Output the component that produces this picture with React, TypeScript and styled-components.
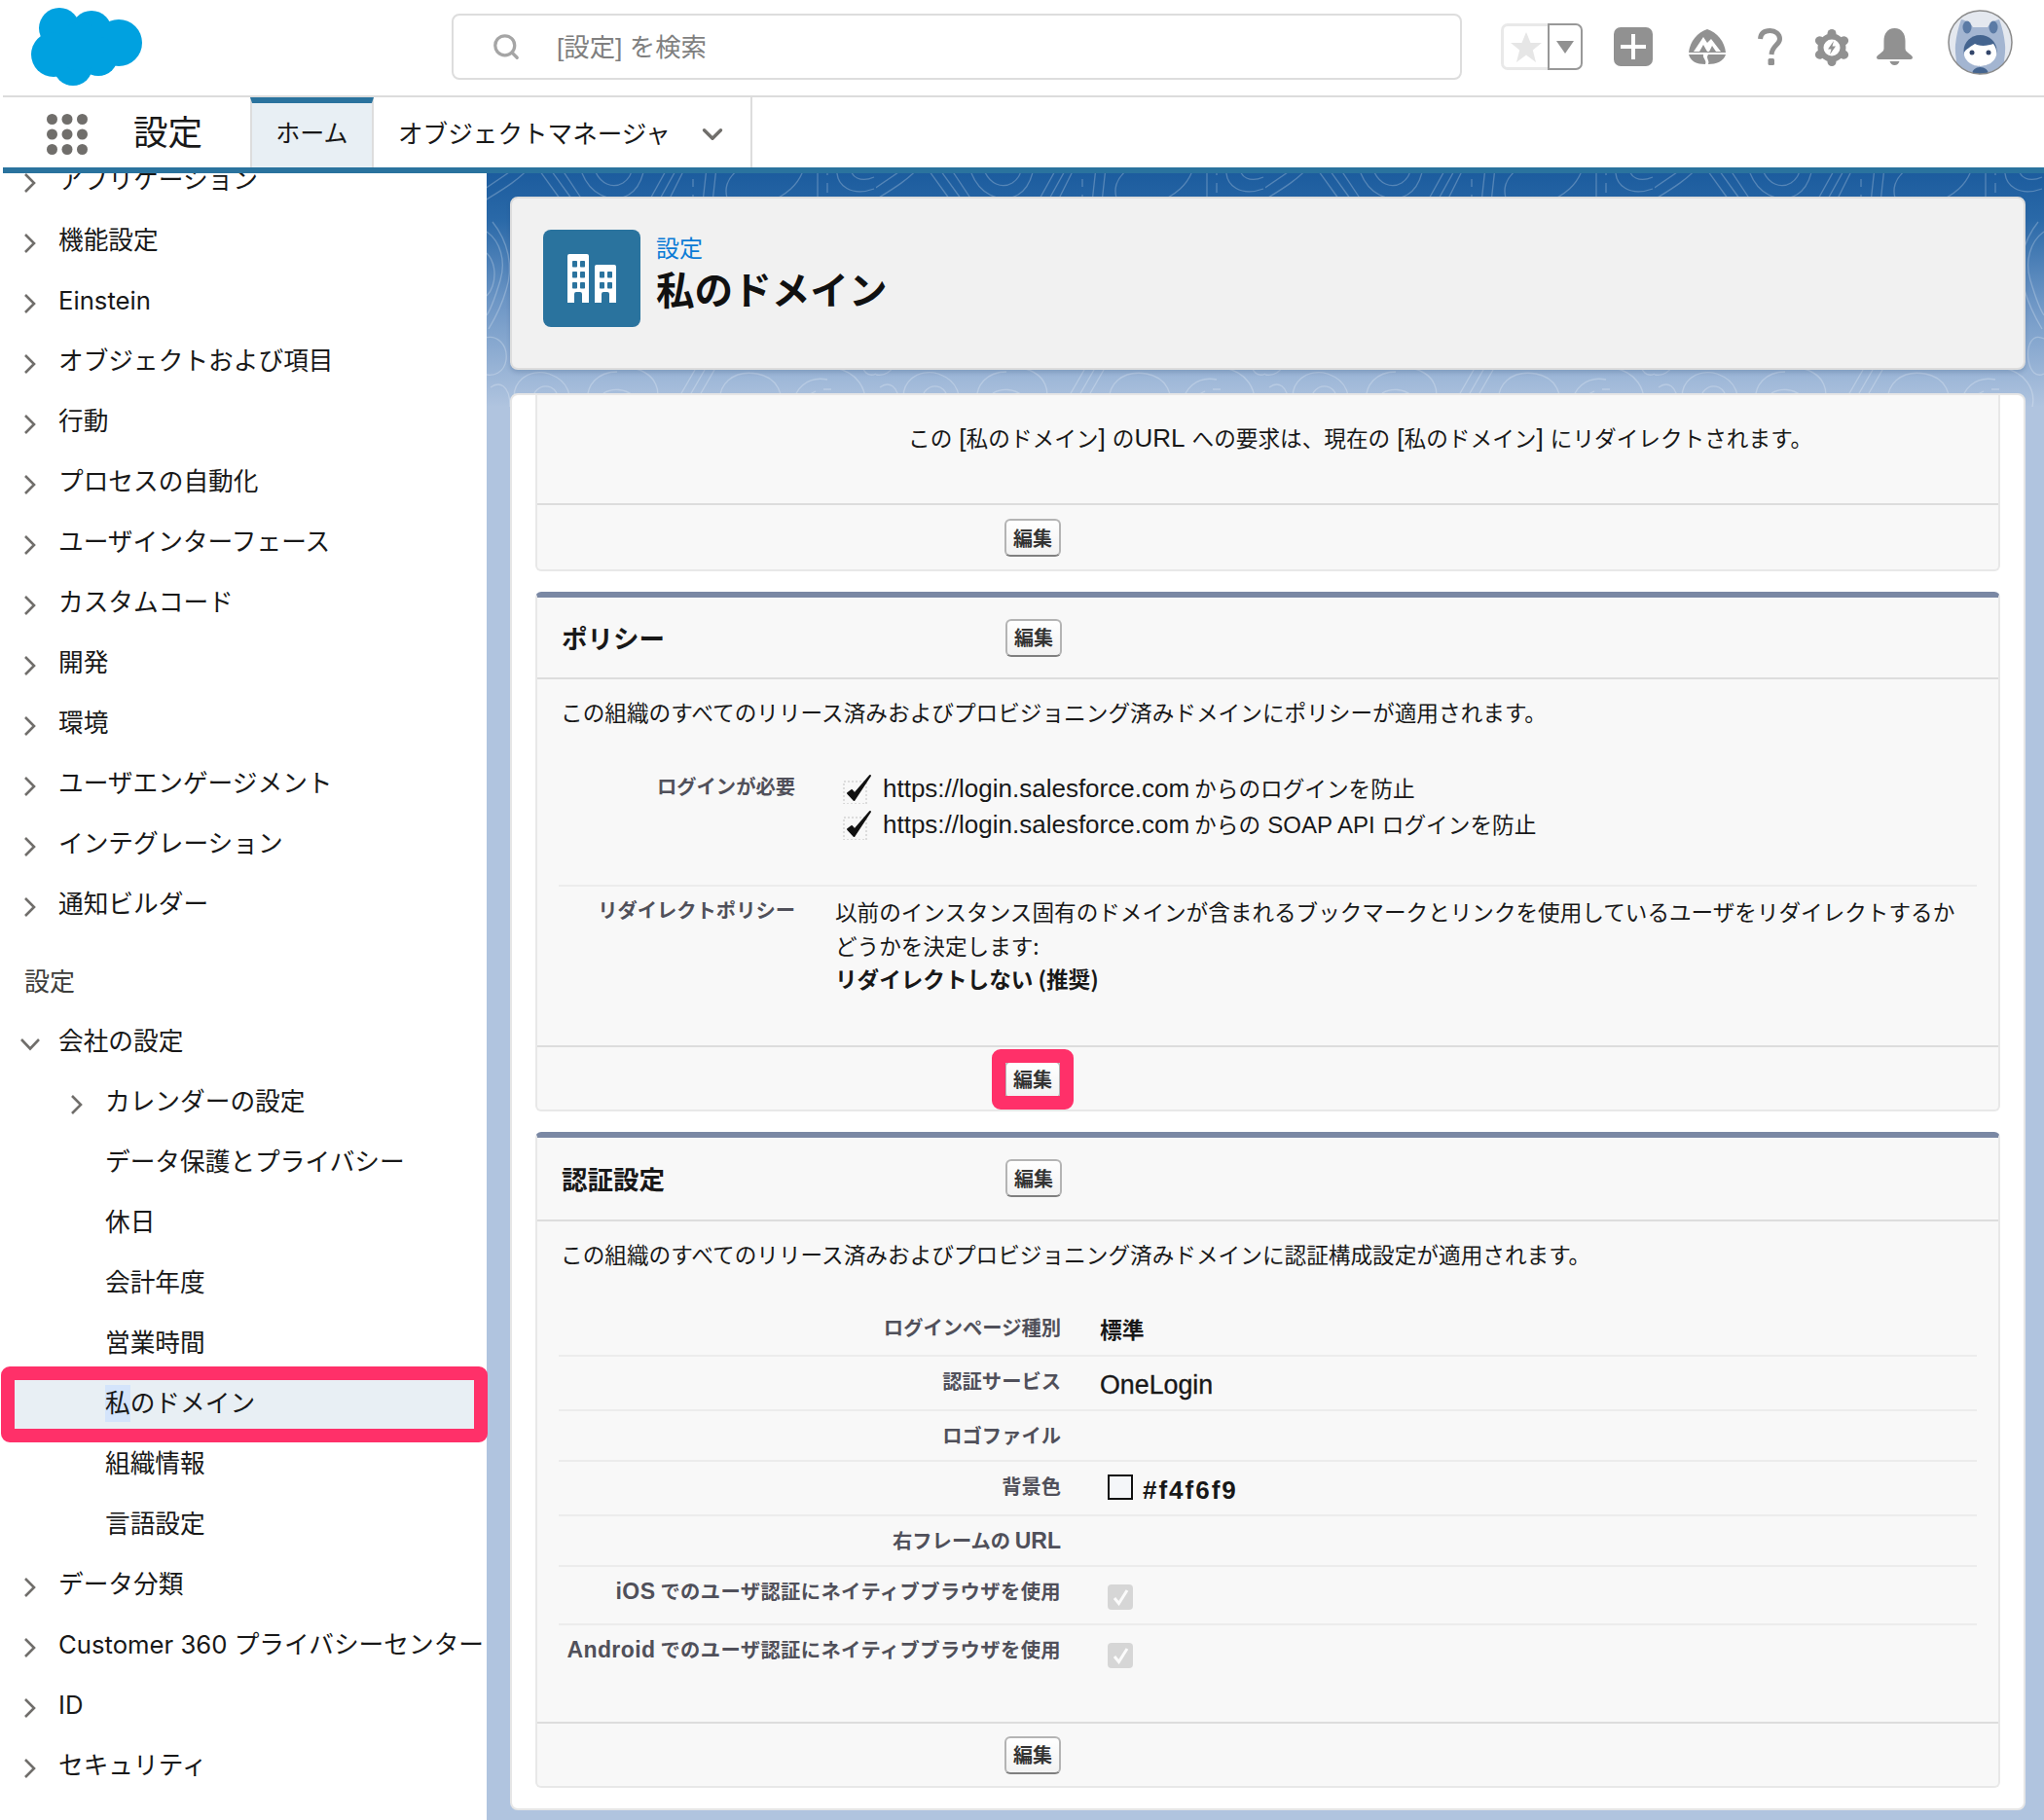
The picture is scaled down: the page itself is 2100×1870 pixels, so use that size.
import * as React from "react";
import styled, { createGlobalStyle } from "styled-components";
import { ChevronDown, Search } from "lucide-react";

const CJK = `"Noto Sans CJK JP", "Noto Sans CJK SC", sans-serif`;
const PINK = "#ff3069";
const TEAL = "#2a739e";

const GlobalStyle = createGlobalStyle`
  html, body { margin: 0; padding: 0; background: #fff; }
  * { box-sizing: border-box; }
  body { font-family: ${CJK}; color: #181818; }
`;

const Page = styled.div`
  width: 2100px;
  height: 1870px;
  display: flex;
  flex-direction: column;
  overflow: hidden;
  padding-left: 3px;
  background: #fff;
`;

/* top bar */
const TopBar = styled.header`
  height: 100px;
  flex: none;
  display: flex;
  align-items: flex-start;
  border-bottom: 2px solid #dcdcdc;
`;
const LogoSlot = styled.div`
  width: 114px;
  height: 80px;
  margin: 8px 0 0 29px;
`;
const SearchBox = styled.div`
  width: 1038px;
  height: 68px;
  margin: 14px 0 0 318px;
  border: 2px solid #dddddd;
  border-radius: 8px;
  display: flex;
  align-items: center;
  padding-left: 39px;
  gap: 37px;
  color: #a5a5a5;
  font: 400 26.4px/38px "Liberation Sans", ${CJK};
  span { color: #7f7f7f; margin-top: 1px; }
`;
const Favorite = styled.div`
  display: flex;
  width: 84px;
  height: 48px;
  margin: 24px 0 0 40px;
`;
const StarPart = styled.div`
  width: 48px;
  border: 3px solid #e9e9e9;
  border-right: 0;
  border-radius: 7px 0 0 7px;
  display: flex;
  align-items: center;
  justify-content: center;
`;
const CaretPart = styled.div`
  width: 36px;
  border: 2px solid #989898;
  border-radius: 0 7px 7px 0;
  display: flex;
  align-items: center;
  justify-content: center;
`;
const ToolIcon = styled.div<{ $left: number; $top: number }>`
  margin: ${(p) => p.$top}px 0 0 ${(p) => p.$left}px;
  display: flex;
  svg { display: block; }
`;

/* app nav */
const NavBar = styled.nav`
  height: 78px;
  flex: none;
  display: flex;
  border-bottom: 6px solid ${TEAL};
`;
const AppLauncher = styled.div`
  width: 134px;
  padding: 17px 0 0 45px;
`;
const AppName = styled.div`
  width: 120px;
  font: 400 35.5px/68px ${CJK};
`;
const HomeTab = styled.div`
  width: 127px;
  border-top: 6px solid ${TEAL};
  border-left: 2px solid #dddddd;
  border-right: 2px solid #dddddd;
  background: #e8eff4;
  text-align: center;
  font: 400 25px/58px ${CJK};
`;
const MenuTab = styled.div`
  width: 389px;
  display: flex;
  align-items: center;
  padding-left: 25px;
  border-right: 2px solid #dddddd;
  font: 400 25.6px/70px ${CJK};
  white-space: nowrap;
  svg { margin-left: 26px; margin-top: 3px; color: #706e6b; }
`;

const Columns = styled.div`
  flex: 1;
  display: flex;
  min-height: 0;
`;

/* side tree */
const Sidebar = styled.aside`
  position: relative;
  z-index: 2;
  width: 497px;
  flex: none;
  overflow-y: clip;
  background: #fff;
  padding-top: 1px;
`;
const TreeList = styled.div`
  margin-top: -25.5px;
`;
const TreeRow = styled.div<{ $indent: number; $current?: boolean }>`
  position: relative;
  height: 62px;
  display: flex;
  align-items: center;
  padding-left: ${(p) => p.$indent}px;
  font: 400 25.7px/36px Inter, ${CJK};
  white-space: nowrap;
  ${(p) =>
    p.$current &&
    `
    &::before {
      content: "";
      position: absolute;
      left: -2px;
      right: -1px;
      top: -7px;
      bottom: -9px;
      background: #e8eff4;
      border: 14px solid ${PINK};
      border-radius: 9px;
    }
  `}
`;
const TreeHeading = styled.div`
  height: 62px;
  margin-top: 17px;
  padding-left: 22px;
  color: #3e3e3c;
  font: 400 26px/60px ${CJK};
`;
const ChevronSlot = styled.div`
  width: 36px;
  flex: none;
  display: flex;
  margin-top: 7px;
  color: #706e6b;
`;
const RowLabel = styled.span`
  position: relative;
`;
const Selected = styled.span`
  background: #d4e4fb;
  display: inline-block;
  line-height: 38px;
`;

/* main column */
const Main = styled.main`
  position: relative;
  flex: 1;
  min-width: 0;
  background: #b0c4df;
  padding: 24px 19px 0 24px;
`;
const Backdrop = styled.svg`
  position: absolute;
  left: 0;
  top: 0;
  width: 100%;
  height: 240px;
`;
const TitleCard = styled.section`
  position: relative;
  height: 178px;
  background: #f1f1f1;
  border: 2px solid #dddddd;
  border-radius: 8px;
  box-shadow: 0 3px 4px rgba(40, 70, 110, 0.2);
  padding: 32px;
  display: flex;
  gap: 16px;
`;
const TitleIcon = styled.div`
  width: 100px;
  height: 100px;
  background: ${TEAL};
  border-radius: 8px;
  display: flex;
  align-items: center;
  justify-content: center;
`;
const Crumb = styled.div`
  color: #0b7bd6;
  font: 400 24px/34px ${CJK};
  margin-top: 1px;
`;
const PageTitle = styled.h1`
  margin: 0;
  font: 700 39.6px/50px ${CJK};
  color: #111;
`;
const BodyCard = styled.div`
  position: relative;
  margin-top: 24px;
  height: 1456px;
  background: #fff;
  border: 2px solid #e6e6e6;
  border-radius: 8px;
  padding: 0 24px;
`;
const Section = styled.section<{ $bar?: boolean }>`
  background: #f8f8f8;
  border: 2px solid #e8e8e8;
  border-top: ${(p) => (p.$bar ? "6px solid #7a88a4" : "0")};
  border-radius: ${(p) => (p.$bar ? "6px" : "0 0 6px 6px")};
  margin-bottom: 21px;
`;
const SectionHead = styled.div<{ $height: number }>`
  height: ${(p) => p.$height}px;
  display: grid;
  grid-template-columns: 456px auto;
  justify-content: start;
  align-items: center;
  padding-left: 25px;
  border-bottom: 2px solid #dddddd;
`;
const SectionName = styled.h2`
  margin: 0;
  font: 700 26.5px/36px ${CJK};
`;
const SectionFoot = styled.div<{ $height: number; $low?: boolean }>`
  height: ${(p) => p.$height}px;
  border-top: 2px solid #dddddd;
  padding: ${(p) => (p.$low ? "3px" : "1px")} 0 0 480px;
  display: flex;
  align-items: center;
`;
const EditButton = styled.button<{ $flagged?: boolean }>`
  position: relative;
  width: 58px;
  height: 39px;
  padding: 0;
  border: 2px solid #b4b4b4;
  border-bottom-color: #7f7f7f;
  border-radius: 6px;
  background: linear-gradient(#ffffff, #f2f2f2);
  color: #333;
  font: 700 20px/34px ${CJK};
  ${(p) =>
    p.$flagged &&
    `
    &::before {
      content: "";
      position: absolute;
      inset: -14px -15px -13px -15px;
      border: 14px solid ${PINK};
      border-radius: 9px;
    }
  `}
`;
const Notice = styled.p`
  margin: 0;
  height: 111px;
  padding: 27px 0 0 381px;
  font: 400 22.65px/34px ${CJK};
  word-spacing: 2px;
`;
const Lead = styled.p<{ $height: number }>`
  margin: 0;
  height: ${(p) => p.$height}px;
  padding: 17px 0 0 24px;
  font: 400 22.65px/34px ${CJK};
`;
const L = styled.span<{ $size?: number }>`
  font-family: "Liberation Sans", sans-serif;
  font-size: ${(p) => p.$size ?? 26}px;
`;
const PolicyRow = styled.div<{ $pad: string; $rule?: boolean }>`
  margin: 0 22px;
  padding: ${(p) => p.$pad};
  display: grid;
  grid-template-columns: 243px 1fr;
  column-gap: 41px;
  ${(p) => p.$rule && "border-bottom: 2px solid #ececec;"}
`;
const FieldLabel = styled.div`
  text-align: right;
  color: #50505a;
  font: 700 20.3px/28px ${CJK};
  white-space: nowrap;
  span { font-family: "Liberation Sans", sans-serif; font-size: 23px; }
`;
const CheckList = styled.div`
  margin-top: -2px;
`;
const CheckLine = styled.div`
  display: flex;
  align-items: center;
  gap: 11px;
  height: 37px;
  margin-left: 8px;
  font: 400 22.65px/37px ${CJK};
  white-space: nowrap;
`;
const PolicyText = styled.div`
  font: 400 22.6px/34.6px ${CJK};
  white-space: nowrap;
  strong { font-weight: 700; }
`;
const AuthRow = styled.div<{ $height: number; $last?: boolean }>`
  height: ${(p) => p.$height}px;
  margin: 0 22px;
  display: grid;
  grid-template-columns: 516px 1fr;
  column-gap: 40px;
  ${(p) => !p.$last && "border-bottom: 2px solid #ececec;"}
`;
const AuthLabel = styled(FieldLabel)<{ $wide?: boolean }>`
  padding-top: 10px;
  letter-spacing: ${(p) => (p.$wide ? "0.4px" : "0")};
`;
const AuthValue = styled.div`
  padding-top: 13px;
  font: 500 22.8px/28px ${CJK};
  display: flex;
  align-items: flex-start;
`;
const ServiceName = styled.span`
  font: 400 26.8px/32px "Liberation Sans", sans-serif;
  -webkit-text-stroke: 0.35px #181818;
`;
const Swatch = styled.i<{ $color: string }>`
  width: 26px;
  height: 26px;
  margin: 0 10px 0 8px;
  border: 2px solid #111;
  background: ${(p) => p.$color};
`;
const HexValue = styled.span`
  font: 700 26px/32px "Liberation Sans", sans-serif;
  letter-spacing: 2px;
`;
const DisabledCheck = styled.span`
  width: 26px;
  height: 26px;
  margin: 5px 0 0 8px;
  border-radius: 4px;
  background: #d6d6d6;
  display: flex;
  align-items: center;
  justify-content: center;
`;

/* drawings */
const CloudLogo = () => (
  <svg width="114" height="80" viewBox="0 0 114 80">
    <g fill="#00a1e0">
      <circle cx="29" cy="21" r="21" />
      <circle cx="62" cy="24" r="21" />
      <circle cx="90" cy="36" r="24" />
      <circle cx="23" cy="48" r="23" />
      <circle cx="43" cy="60" r="20" />
      <circle cx="69" cy="50" r="20" />
      <circle cx="50" cy="40" r="25" />
    </g>
  </svg>
);
const NavGrid = () => (
  <svg width="44" height="44" viewBox="0 0 44 44" fill="#706e6b">
    {[5.5, 21, 36.5].map((y) =>
      [5.5, 21, 36.5].map((x) => <ellipse key={`${x}-${y}`} cx={x} cy={y} rx="5.5" ry="5.5" />)
    )}
  </svg>
);
const PlusIcon = () => (
  <svg width="40" height="40" viewBox="0 0 40 40">
    <rect width="40" height="40" rx="7" fill="#919191" />
    <path d="M20 7v26M7 20h26" stroke="#fff" strokeWidth="4" />
  </svg>
);
const TrailheadIcon = () => (
  <svg width="38" height="37" viewBox="0 0 38 37" fill="#919191">
    <path d="M19 0C29 3 37 13 38 24H0C1 13 9 3 19 0Z" />
    <path d="M0 26H15C14 30 19 32 17 36C8 36 2 33 0 26Z" />
    <path d="M20 26H38C36 33 28 36 20 36C22 32 17 30 20 26Z" />
    <path d="M5 23L15 8L19 14L23 10L33 23Z" fill="#fff" />
    <path d="M11 23L15 16L19 23ZM21 23L24 17L28 23Z" />
  </svg>
);
const QuestionIcon = () => (
  <svg width="25" height="38" viewBox="0 0 25 38">
    <path d="M2.5 11C3 5 7 2.500 12.500 2.500C18 2.500 22.500 6 22.500 11C22.500 17 14.500 18 14 27" fill="none" stroke="#919191" strokeWidth="5" />
    <rect x="10.500" y="31" width="6.500" height="7" rx="1.500" fill="#919191" />
  </svg>
);
const GearIcon = () => (
  <svg width="36" height="38" viewBox="0 0 36 38">
    <g fill="#919191">
      <circle cx="18" cy="19" r="14.500" />
      {[0, 60, 120, 180, 240, 300].map((a) => (
        <circle key={a} cx="18" cy="4.500" r="4.500" transform={`rotate(${a} 18 19)`} />
      ))}
    </g>
    <circle cx="18" cy="19" r="8.500" fill="#fff" />
    <path d="M20 12L14 20.500H17.500L16 26L22 17.500H18.500Z" fill="#919191" />
  </svg>
);
const BellIcon = () => (
  <svg width="37" height="38" viewBox="0 0 37 38" fill="#919191">
    <path d="M18.500 0C26 0 29.500 6 29.500 13V21C29.500 25 37 27 37 30C37 31 36 32 35 32H2C1 32 0 31 0 30C0 27 7.500 25 7.500 21V13C7.500 6 11 0 18.500 0Z" />
    <path d="M13.500 34H23.500C22.500 36.500 21 38 18.500 38C16 38 14.500 36.500 13.500 34Z" />
  </svg>
);
const AvatarIcon = () => (
  <svg width="67" height="67" viewBox="0 0 67 67">
    <defs>
      <clipPath id="avatarClip">
        <ellipse cx="33.500" cy="33.500" rx="32.500" ry="32.500" />
      </clipPath>
    </defs>
    <g clipPath="url(#avatarClip)">
      <rect width="67" height="67" fill="#e4e8ef" />
      <path d="M14 10C20 11 24 15 26 18H41C43 15 47 11 53 10C56 18 58 26 59 36C60 48 56 55 58 67H9C11 55 7 48 8 36C9 26 11 18 14 10Z" fill="#a3b5d1" />
      <ellipse cx="20" cy="18" rx="4.500" ry="6.500" fill="#5b7aa5" />
      <ellipse cx="47" cy="18" rx="4.500" ry="6.500" fill="#5b7aa5" />
      <ellipse cx="33.500" cy="42" rx="17" ry="16" fill="#44648f" />
      <path d="M17 44C19 40 24 38 28 35C33 38 42 37 47 35C50 39 50.700 44 50 47C48 54 41 58 33.500 58C26 58 19 54 17 47Z" fill="#fff" />
      <circle cx="25" cy="44" r="2.500" fill="#33466a" />
      <circle cx="42" cy="44" r="2.500" fill="#33466a" />
      <ellipse cx="33.500" cy="66" rx="8.500" ry="7" fill="#44648f" />
    </g>
    <ellipse cx="33.500" cy="33.500" rx="32.500" ry="32.500" fill="none" stroke="#8b8b8b" strokeWidth="1.500" />
  </svg>
);
const TreeChevron = ({ open }: { open?: boolean }) =>
  open ? (
    <svg width="22" height="14" viewBox="0 0 22 14" style={{ marginLeft: -4 }} fill="none" stroke="#706e6b" strokeWidth="2.600">
      <path d="M2 2L11 11.500L20 2" />
    </svg>
  ) : (
    <svg width="13" height="22" viewBox="0 0 13 22" fill="none" stroke="#706e6b" strokeWidth="2.600">
      <path d="M2 2L11 11L2 20" />
    </svg>
  );
const BuildingIcon = () => (
  <svg width="50" height="50" viewBox="0 0 50 50">
    <path d="M2 0H20A2 2 0 0 1 22 2V50H15V41A2 2 0 0 0 13 39H9A2 2 0 0 0 7 41V50H0V2A2 2 0 0 1 2 0Z" fill="#fff" />
    <path d="M30 11H48A2 2 0 0 1 50 13V50H43V41A2 2 0 0 0 41 39H37A2 2 0 0 0 35 41V50H28V13A2 2 0 0 1 30 11Z" fill="#fff" />
    <g fill={TEAL}>
      {[7, 18, 29].map((y) =>
        [5, 13].map((x) => <rect key={`a${x}-${y}`} x={x} y={y} width="5" height="6.500" rx="0.800" />)
      )}
      {[18, 29].map((y) =>
        [33, 41].map((x) => <rect key={`b${x}-${y}`} x={x} y={y} width="5" height="6.500" rx="0.800" />)
      )}
    </g>
  </svg>
);
const TickBox = () => (
  <svg width="30" height="32" viewBox="0 0 30 32">
    <rect x="1" y="9" width="23" height="23" fill="none" stroke="#d2d2d2" strokeWidth="1.500" strokeDasharray="2 2" />
    <path d="M5 21L11.500 28L28 3L12 21.500L9 18Z" fill="#111" stroke="#111" strokeWidth="2" strokeLinejoin="round" />
  </svg>
);

const topoLines = [
  // band under the nav
  "M-5 18C10 8 22 0 30 -6",
  "M-5 30C14 18 32 8 44 -6",
  "M52 -6L78 30M64 -6L90 30M76 -6L100 30",
  "M96 -6C104 22 128 32 146 22C156 16 160 6 162 -6",
  "M110 -6C116 12 130 16 140 10C146 6 148 2 150 -6",
  "M166 30L186 -6M176 30L196 -6M186 30L204 -6",
  "M212 30V22M212 14V6",
  "M222 30L226 -6M232 30L236 -6",
  "M262 -6C246 4 242 18 250 32",
  "M284 32C308 24 322 10 326 -6",
  "M340 -6V32M350 -6V2M350 10V20",
  "M360 -6C358 14 376 24 398 16",
  "M374 -6C374 4 384 10 398 4",
  // left and right edge strips
  "M0 60C14 70 20 90 14 110C8 130 4 140 0 146",
  "M6 50C22 70 28 96 20 120C16 134 8 150 2 160",
  "M0 82C8 90 10 104 6 116C4 122 2 124 0 126",
  "M-4 170C10 164 22 176 20 192C18 204 8 210 -4 206",
  "M4 220C12 214 24 216 24 240",
  "M400 60C386 70 380 90 386 110C392 130 396 140 400 146",
  "M394 50C378 70 372 96 380 120C384 134 392 150 398 160",
  "M400 170C388 164 382 176 384 192C386 204 392 210 400 206",
  // band between the cards
  "M30 240C22 214 44 200 64 206C86 214 88 232 82 240",
  "M48 240C44 224 56 216 66 220C74 224 74 232 72 240",
  "M104 240C100 216 116 204 134 204",
  "M150 200C176 206 180 226 172 240",
  "M192 240L214 202M202 240L224 202M212 240L234 202",
  "M240 240C236 216 254 202 278 206C300 210 306 230 300 240",
  "M316 240C314 222 330 208 350 212",
  "M358 200C380 204 392 222 388 240",
  "M120 226C130 220 142 222 150 228",
  "M330 228L338 224M346 222L354 222",
];

const Topography = () => (
  <Backdrop aria-hidden="true">
    <defs>
      <linearGradient id="topoFade" x1="0" y1="0" x2="0" y2="1">
        <stop offset="0" stopColor="#1c5c9e" />
        <stop offset="0.2" stopColor="#2a69a8" />
        <stop offset="0.55" stopColor="#6d96c5" />
        <stop offset="1" stopColor="#b0c4df" />
      </linearGradient>
      <pattern id="topoTile" width="400" height="240" patternUnits="userSpaceOnUse">
        {topoLines.map((d) => (
          <path key={d} d={d} fill="none" stroke="#ffffff" strokeOpacity="0.24" strokeWidth="1.300" />
        ))}
      </pattern>
    </defs>
    <rect width="100%" height="100%" fill="url(#topoFade)" />
    <rect width="100%" height="100%" fill="url(#topoTile)" />
  </Backdrop>
);

type TreeItem = { label: string; depth?: 0 | 1; chevron?: "right" | "down"; current?: boolean; heading?: boolean };

const treeItems: TreeItem[] = [
  { label: "アプリケーション", chevron: "right" },
  { label: "機能設定", chevron: "right" },
  { label: "Einstein", chevron: "right" },
  { label: "オブジェクトおよび項目", chevron: "right" },
  { label: "行動", chevron: "right" },
  { label: "プロセスの自動化", chevron: "right" },
  { label: "ユーザインターフェース", chevron: "right" },
  { label: "カスタムコード", chevron: "right" },
  { label: "開発", chevron: "right" },
  { label: "環境", chevron: "right" },
  { label: "ユーザエンゲージメント", chevron: "right" },
  { label: "インテグレーション", chevron: "right" },
  { label: "通知ビルダー", chevron: "right" },
  { label: "設定", heading: true },
  { label: "会社の設定", chevron: "down" },
  { label: "カレンダーの設定", depth: 1, chevron: "right" },
  { label: "データ保護とプライバシー", depth: 1 },
  { label: "休日", depth: 1 },
  { label: "会計年度", depth: 1 },
  { label: "営業時間", depth: 1 },
  { label: "私のドメイン", depth: 1, current: true },
  { label: "組織情報", depth: 1 },
  { label: "言語設定", depth: 1 },
  { label: "データ分類", chevron: "right" },
  { label: "Customer 360 プライバシーセンター", chevron: "right" },
  { label: "ID", chevron: "right" },
  { label: "セキュリティ", chevron: "right" },
];

function WhiteTick() {
  return (
    <svg width="17" height="18" viewBox="0 0 17 18">
      <path d="M2 10L6.500 15.500L15 2" fill="none" stroke="#fff" strokeOpacity="0.9" strokeWidth="3" />
    </svg>
  );
}

const authRows: { label: React.ReactNode; height: number; value?: React.ReactNode; last?: boolean; wide?: boolean }[] = [
  { label: "ログインページ種別", height: 55, value: <strong>標準</strong> },
  { label: "認証サービス", height: 56, value: <ServiceName>OneLogin</ServiceName> },
  { label: "ロゴファイル", height: 52 },
  {
    label: "背景色",
    height: 56,
    value: (
      <>
        <Swatch $color="#f4f6f9" />
        <HexValue>#f4f6f9</HexValue>
      </>
    ),
  },
  { label: <>右フレームの <span>URL</span></>, height: 52 },
  {
    label: <><span>iOS</span> でのユーザ認証にネイティブブラウザを使用</>,
    height: 60,
    value: <DisabledCheck><WhiteTick /></DisabledCheck>,
    wide: true,
  },
  {
    label: <><span>Android</span> でのユーザ認証にネイティブブラウザを使用</>,
    height: 99,
    value: <DisabledCheck><WhiteTick /></DisabledCheck>,
    last: true,
    wide: true,
  },
];

export default function App() {
  return (
    <Page>
      <GlobalStyle />
      <TopBar>
        <LogoSlot>
          <CloudLogo />
        </LogoSlot>
        <SearchBox>
          <Search size={30} strokeWidth={2.6} />
          <span>[設定] を検索</span>
        </SearchBox>
        <Favorite>
          <StarPart>
            <svg width="32" height="31" viewBox="0 0 32 31">
              <path d="M16 0L20.500 11H32L22.800 18.500L26 31L16 23.500L6 31L9.200 18.500L0 11H11.500Z" fill="#e6e6e6" />
            </svg>
          </StarPart>
          <CaretPart>
            <svg width="18" height="13" viewBox="0 0 18 13">
              <path d="M0 0H18L9 13Z" fill="#919191" />
            </svg>
          </CaretPart>
        </Favorite>
        <ToolIcon $left={32} $top={28}><PlusIcon /></ToolIcon>
        <ToolIcon $left={37} $top={30}><TrailheadIcon /></ToolIcon>
        <ToolIcon $left={33} $top={29}><QuestionIcon /></ToolIcon>
        <ToolIcon $left={33} $top={30}><GearIcon /></ToolIcon>
        <ToolIcon $left={28} $top={29}><BellIcon /></ToolIcon>
        <ToolIcon $left={36} $top={10}><AvatarIcon /></ToolIcon>
      </TopBar>

      <NavBar>
        <AppLauncher>
          <NavGrid />
        </AppLauncher>
        <AppName>設定</AppName>
        <HomeTab>ホーム</HomeTab>
        <MenuTab>
          オブジェクトマネージャ
          <ChevronDown size={34} strokeWidth={2.4} />
        </MenuTab>
      </NavBar>

      <Columns>
        <Sidebar>
          <TreeList>
            {treeItems.map((item) =>
              item.heading ? (
                <TreeHeading key={item.label}>{item.label}</TreeHeading>
              ) : (
                <TreeRow key={item.label} $indent={item.depth ? 69 : 21} $current={item.current}>
                  <ChevronSlot>
                    {item.chevron && <TreeChevron open={item.chevron === "down"} />}
                  </ChevronSlot>
                  <RowLabel>
                    {item.current ? (
                      <>
                        <Selected>私</Selected>のドメイン
                      </>
                    ) : (
                      item.label
                    )}
                  </RowLabel>
                </TreeRow>
              )
            )}
          </TreeList>
        </Sidebar>

        <Main>
          <Topography />
          <TitleCard>
            <TitleIcon>
              <BuildingIcon />
            </TitleIcon>
            <div>
              <Crumb>設定</Crumb>
              <PageTitle>私のドメイン</PageTitle>
            </div>
          </TitleCard>

          <BodyCard>
            <Section>
              <Notice>
                この <L>[</L>私のドメイン<L>]</L> の<L>URL</L> への要求は、現在の <L>[</L>私のドメイン<L>]</L> にリダイレクトされます。
              </Notice>
              <SectionFoot $height={68}>
                <EditButton>編集</EditButton>
              </SectionFoot>
            </Section>

            <Section $bar>
              <SectionHead $height={84}>
                <SectionName>ポリシー</SectionName>
                <EditButton>編集</EditButton>
              </SectionHead>
              <Lead $height={51}>
                この組織のすべてのリリース済みおよびプロビジョニング済みドメインにポリシーが適用されます。
              </Lead>
              <PolicyRow $pad="44px 0 44px" $rule>
                <FieldLabel>ログインが必要</FieldLabel>
                <CheckList>
                  <CheckLine>
                    <TickBox />
                    <span><L>https://login.salesforce.com</L> からのログインを防止</span>
                  </CheckLine>
                  <CheckLine>
                    <TickBox />
                    <span><L>https://login.salesforce.com</L> からの<L> </L><L $size={24}>SOAP API</L><L> </L>ログインを防止</span>
                  </CheckLine>
                </CheckList>
              </PolicyRow>
              <PolicyRow $pad="9px 0 50px">
                <FieldLabel>リダイレクトポリシー</FieldLabel>
                <PolicyText>
                  以前のインスタンス固有のドメインが含まれるブックマークとリンクを使用しているユーザをリダイレクトするか
                  <br />
                  どうかを決定します:
                  <br />
                  <strong>リダイレクトしない (推奨)</strong>
                </PolicyText>
              </PolicyRow>
              <SectionFoot $height={66} $low>
                <EditButton $flagged>編集</EditButton>
              </SectionFoot>
            </Section>

            <Section $bar>
              <SectionHead $height={86}>
                <SectionName>認証設定</SectionName>
                <EditButton>編集</EditButton>
              </SectionHead>
              <Lead $height={84}>
                この組織のすべてのリリース済みおよびプロビジョニング済みドメインに認証構成設定が適用されます。
              </Lead>
              {authRows.map((row, i) => (
                <AuthRow key={i} $height={row.height} $last={row.last}>
                  <AuthLabel $wide={row.wide}>{row.label}</AuthLabel>
                  <AuthValue>{row.value}</AuthValue>
                </AuthRow>
              ))}
              <SectionFoot $height={66}>
                <EditButton>編集</EditButton>
              </SectionFoot>
            </Section>
          </BodyCard>
        </Main>
      </Columns>
    </Page>
  );
}
